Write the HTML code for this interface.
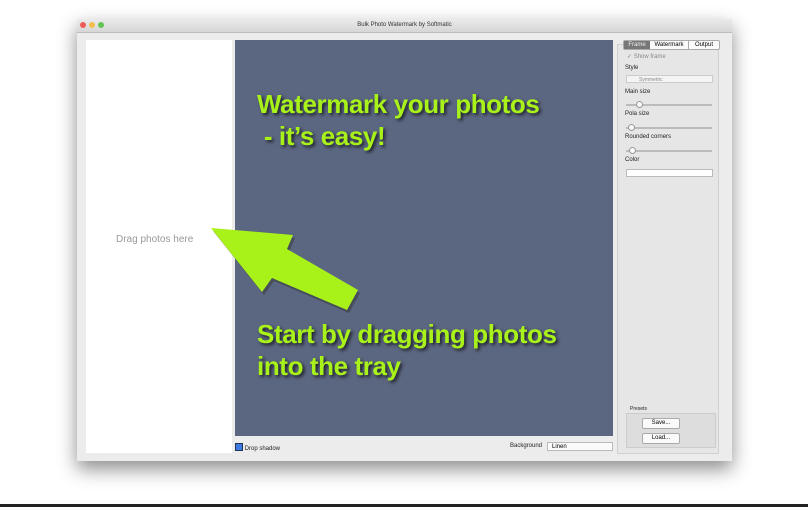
<!DOCTYPE html>
<html><head><style>
body{margin:0;width:808px;height:507px;background:#fff;position:relative;overflow:hidden;font-family:"Liberation Sans",sans-serif}
.win{position:absolute;left:77px;top:19px;width:655px;height:442px;background:#ececec;box-shadow:0 8px 18px rgba(0,0,0,.45);}
.title{position:absolute;left:0;top:0;width:100%;height:13px;background:linear-gradient(#ebebeb,#d6d6d6);border-bottom:1px solid #bdbdbd;font-size:6px;color:#333;text-align:center;line-height:13px}
.dot{position:absolute;top:3px;width:6px;height:6px;border-radius:50%}
.tray{position:absolute;left:9px;top:21px;width:146px;height:413px;background:#fff}
.blue{position:absolute;left:158px;top:21px;width:378px;height:396px;background:#5b6680}
.g{position:absolute;color:#a8f21a;font-weight:bold;font-size:26px;letter-spacing:-0.4px;text-shadow:2px 2px 3px rgba(0,0,0,.7);white-space:nowrap}
.s{font-size:6px;color:#222;position:absolute}
.panel{position:absolute;left:540px;top:25px;width:100px;height:408px;border:1px solid #d0d0d0;background:#e6e6e6}
.sl{position:absolute;left:8px;width:86px;height:2px;background:#bbb}
.kn{position:absolute;width:5px;height:5px;border-radius:50%;background:#fafafa;border:1px solid #999;top:-3px}
.btn{position:absolute;left:15px;width:36px;height:9px;background:#fafafa;border:1px solid #aaa;border-radius:2px;font-size:6px;text-align:center;line-height:9px}
</style></head><body>
<div class="win">
 <div class="title">Bulk Photo Watermark by Softmatic
  <div class="dot" style="left:3px;background:#ec5d57"></div>
  <div class="dot" style="left:12px;background:#f5bd4f"></div>
  <div class="dot" style="left:21px;background:#61c454"></div>
 </div>
 <div class="tray"><div style="position:absolute;left:30px;top:194px;font-size:10px;color:#999">Drag photos here</div></div>
 <div class="blue"></div>
 <div class="panel">
  <div style="position:absolute;left:5px;top:-5px;height:8px;width:95px;display:flex;font-size:6px;border:1px solid #aaa;background:#fafafa;border-radius:2px">
   <div style="width:26px;background:#777;color:#eee;text-align:center;line-height:8px">Frame</div>
   <div style="width:38px;text-align:center;line-height:8px;border-right:1px solid #aaa">Watermark</div>
   <div style="flex:1;text-align:center;line-height:8px">Output</div></div>
  <div class="s" style="left:9px;top:8px;color:#888">✓ Show frame</div>
  <div class="s" style="left:7px;top:20px">Style</div>
  <div style="position:absolute;left:8px;top:30px;width:87px;height:8px;background:#f4f4f4;border:1px solid #ccc;font-size:5px;color:#888;line-height:8px;padding-left:12px;box-sizing:border-box">Symmetric</div>
  <div class="s" style="left:7px;top:44px">Main size</div>
  <div class="sl" style="top:59px"><div class="kn" style="left:10px"></div></div>
  <div class="s" style="left:7px;top:66px">Pola size</div>
  <div class="sl" style="top:82px"><div class="kn" style="left:2px"></div></div>
  <div class="s" style="left:7px;top:89px">Rounded corners</div>
  <div class="sl" style="top:105px"><div class="kn" style="left:3px"></div></div>
  <div class="s" style="left:7px;top:112px">Color</div>
  <div style="position:absolute;left:8px;top:124px;width:85px;height:6px;background:#fff;border:1px solid #bbb"></div>
  <div class="s" style="left:12px;top:361px;font-size:5px">Presets</div>
  <div style="position:absolute;left:8px;top:368px;width:88px;height:33px;background:#ddd;border:1px solid #ccc">
   <div class="btn" style="top:4px">Save...</div>
   <div class="btn" style="top:19px">Load...</div>
  </div>
 </div>
 <div class="s" style="left:158px;top:424px"><span style="display:inline-block;width:6px;height:6px;background:#3b7ae0;border:1px solid #235;vertical-align:-1px"></span> Drop shadow</div>
 <div class="s" style="left:433px;top:424px">Background</div>
 <div style="position:absolute;left:470px;top:423px;width:66px;height:9px;background:#fafafa;border:1px solid #bbb;font-size:6px;line-height:9px;padding-left:4px;box-sizing:border-box">Linen</div>
</div>
<div class="g" style="left:257px;top:89px">Watermark your photos</div>
<div class="g" style="left:257px;top:121px">&nbsp;- it’s easy!</div>
<div class="g" style="left:257px;top:319px">Start by dragging photos</div>
<div class="g" style="left:257px;top:351px">into the tray</div>
<svg style="position:absolute;left:0;top:0" width="808" height="507">
 <polygon points="211,228 293,235 287,249 358,290 347,310 272,278 262,292" fill="#333" opacity=".5" transform="translate(2,3)"/>
 <polygon points="211,228 293,235 287,249 358,290 347,310 272,278 262,292" fill="#a8f21a"/>
</svg>
<div style="position:absolute;left:0;top:504px;width:808px;height:3px;background:#222"></div>
</body></html>
